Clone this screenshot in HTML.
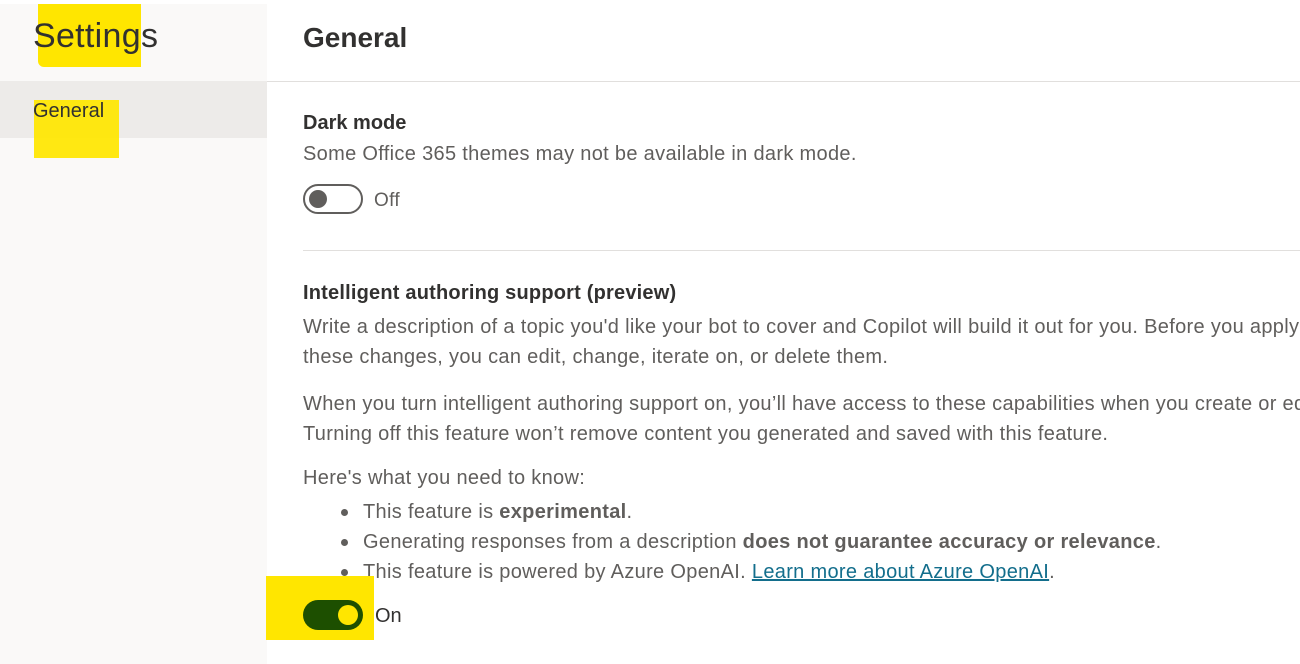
<!DOCTYPE html>
<html><head><style>
body{margin:0;width:1300px;height:664px;overflow:hidden;background:#fff;font-family:"Segoe UI","Liberation Sans",sans-serif;position:relative}
.side{position:absolute;left:0;top:4px;width:267px;height:660px;background:#faf9f8}
.sel{position:absolute;left:0;top:81px;width:267px;height:57px;background:#edebe9}
.hl{position:absolute;background:#ffe600}
.t{position:absolute;white-space:nowrap}
.body{color:#605e5c;font-size:20px;letter-spacing:0.32px}
.div{position:absolute;height:1px;background:#e1dfdd}
</style></head><body>
<div class="side"></div>
<div class="sel"></div>
<div class="hl" style="left:38px;top:4px;width:103px;height:63px;border-radius:0 0 0 6px"></div>
<div class="hl" style="left:34px;top:100px;width:85px;height:58px;opacity:.93"></div>
<div class="t" style="left:33px;top:17px;font-size:34px;color:#323130;letter-spacing:0.3px">Settings</div>
<div class="t" style="left:33px;top:100px;font-size:20px;color:#323130">General</div>
<div class="t" style="left:303px;top:22px;font-size:28px;font-weight:600;color:#323130">General</div>
<div class="div" style="left:267px;top:81px;width:1033px"></div>
<div class="t" style="left:303px;top:112px;font-size:20px;font-weight:700;color:#323130">Dark mode</div>
<div class="t body" style="left:303px;top:143px">Some Office 365 themes may not be available in dark mode.</div>
<div style="position:absolute;left:303px;top:184px;width:56px;height:26px;border:2px solid #605e5c;border-radius:15px"></div>
<div style="position:absolute;left:309px;top:190px;width:18px;height:18px;border-radius:50%;background:#605e5c"></div>
<div class="t body" style="left:374px;top:190px;font-size:19px">Off</div>
<div class="div" style="left:303px;top:250px;width:997px"></div>
<div class="t" style="left:303px;top:282px;font-size:20px;font-weight:700;color:#323130;letter-spacing:0.2px">Intelligent authoring support (preview)</div>
<div class="t body" style="left:303px;top:312px;line-height:30px">Write a description of a topic you'd like your bot to cover and Copilot will build it out for you. Before you apply<br>these changes, you can edit, change, iterate on, or delete them.</div>
<div class="t body" style="left:303px;top:389px;line-height:30px">When you turn intelligent authoring support on, you’ll have access to these capabilities when you create or edit<br>Turning off this feature won’t remove content you generated and saved with this feature.</div>
<div class="t body" style="left:303px;top:467px">Here's what you need to know:</div>
<div class="t body" style="left:341px;top:497px;line-height:30px">
<span style="position:absolute;left:0;top:12px;width:7px;height:7px;border-radius:50%;background:#605e5c"></span>
<span style="position:absolute;left:0;top:42px;width:7px;height:7px;border-radius:50%;background:#605e5c"></span>
<span style="position:absolute;left:0;top:72px;width:7px;height:7px;border-radius:50%;background:#605e5c"></span>
<div style="margin-left:22px">This feature is <b>experimental</b>.<br>Generating responses from a description <b>does not guarantee accuracy or relevance</b>.<br>This feature is powered by Azure OpenAI. <span style="color:#136e8c;text-decoration:underline">Learn more about Azure OpenAI</span>.</div></div>
<div class="hl" style="left:266px;top:576px;width:108px;height:64px"></div>
<div style="position:absolute;left:303px;top:600px;width:60px;height:30px;border-radius:15px;background:#1d4f00"></div>
<div style="position:absolute;left:338px;top:605px;width:20px;height:20px;border-radius:50%;background:#ffe600"></div>
<div class="t" style="left:375px;top:605px;font-size:20px;color:#323130">On</div>
</body></html>
